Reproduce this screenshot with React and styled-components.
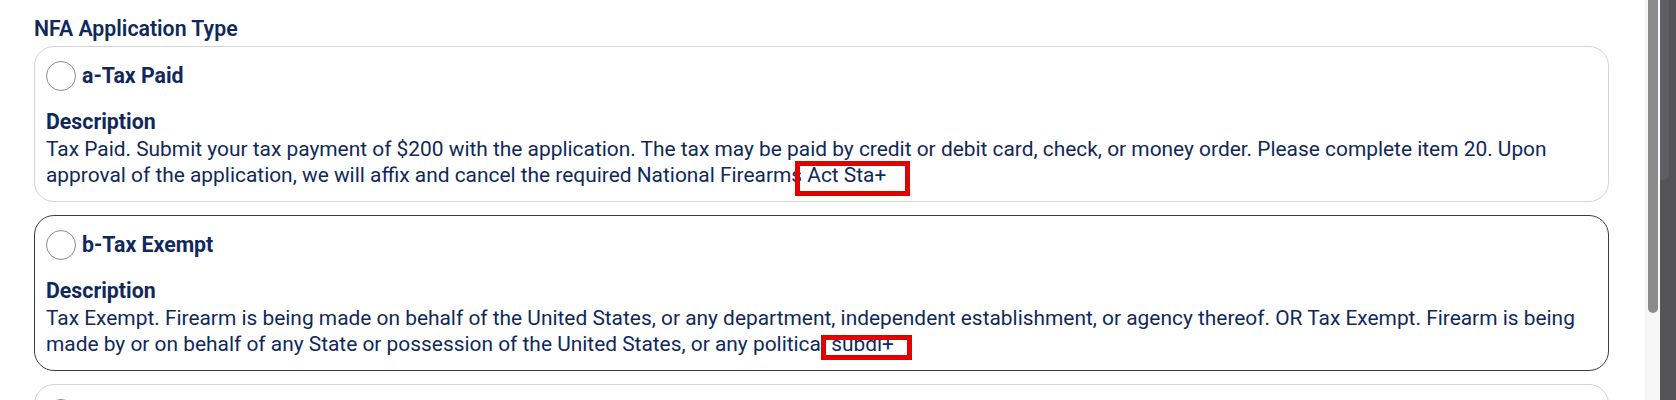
import React from "react";
import styled, { createGlobalStyle } from "styled-components";

const GlobalStyle = createGlobalStyle`
  html, body {
    margin: 0;
    padding: 0;
    background: #ffffff;
    font-family: Roboto, "Noto Sans", Arial, sans-serif;
  }
`;

const Shell = styled.div`
  display: flex;
  height: 400px;
  overflow: hidden;
  background: #ffffff;
`;

const Main = styled.main`
  flex: 1;
  min-width: 0;
  padding: 17px 36px 0 34px;
`;

const Title = styled.h2`
  margin: 0 0 5px;
  font-size: 21.3px;
  line-height: 24px;
  font-weight: 600;
  color: #10295a;
`;

const List = styled.div`
  display: flex;
  flex-direction: column;
  gap: 13px;
`;

const Card = styled.label`
  position: relative;
  display: block;
  box-sizing: border-box;
  height: 156px;
  padding: 14px 6px 13px 11px;
  border: 1px solid ${(p) => (p.$active ? "#3c3c3c" : "#d3d3d3")};
  border-radius: 20px;
  background: #ffffff;
  color: #10295a;
`;

const Header = styled.div`
  display: flex;
  align-items: center;
  gap: 6px;
  height: 30px;
  margin-bottom: 17px;
`;

const Radio = styled.span`
  box-sizing: border-box;
  width: 30px;
  height: 30px;
  border-radius: 50%;
  border: 1px solid #8a8a8a;
  background: #ffffff;
  flex: none;
`;

const OptionName = styled.span`
  font-size: 21.3px;
  font-weight: 700;
  line-height: 30px;
  color: #10295a;
`;

const DescTitle = styled.div`
  font-size: 21.3px;
  font-weight: 700;
  line-height: 28px;
`;

const DescText = styled.p`
  margin: 0;
  font-size: 20.9px;
  line-height: 26px;
  font-weight: 400;
`;

const Highlight = styled.span`
  position: absolute;
  box-sizing: border-box;
  border: 5px solid #e30000;
  pointer-events: none;
`;

const Track = styled.div`
  width: 15px;
  flex: none;
  background: #f7f7f7;
  display: flex;
  justify-content: center;
`;

const Thumb = styled.div`
  width: 10px;
  height: 313px;
  background: #8b8b8b;
  border-radius: 0 0 5px 5px;
`;

const SidePanel = styled.div`
  width: 16px;
  flex: none;
  background: #545457;
`;

const SideTab = styled.div`
  width: 9px;
  height: 180px;
  background: #5f5f63;
  border-radius: 0 0 6px 0;
`;

const options = [
  {
    name: "a-Tax Paid",
    text:
      "Tax Paid. Submit your tax payment of $200 with the application. The tax may be paid by credit or debit card, check, or money order. Please complete item 20. Upon approval of the application, we will affix and cancel the required National Firearms Act Sta+",
    box: { left: 760, top: 114, width: 115, height: 35 },
  },
  {
    name: "b-Tax Exempt",
    active: true,
    text:
      "Tax Exempt. Firearm is being made on behalf of the United States, or any department, independent establishment, or agency thereof. OR Tax Exempt. Firearm is being made by or on behalf of any State or possession of the United States, or any political subdi+",
    box: { left: 786, top: 119, width: 91, height: 25 },
  },
];

export default function App() {
  return (
    <>
      <GlobalStyle />
      <Shell>
        <Main>
          <Title>NFA Application Type</Title>
          <List>
            {options.map((o) => (
              <Card key={o.name} $active={o.active}>
                <Header>
                  <Radio />
                  <OptionName>{o.name}</OptionName>
                </Header>
                <DescTitle>Description</DescTitle>
                <DescText>{o.text}</DescText>
                <Highlight style={o.box} />
              </Card>
            ))}
            <Card>
              <Header>
                <Radio />
              </Header>
            </Card>
          </List>
        </Main>
        <Track>
          <Thumb />
        </Track>
        <SidePanel>
          <SideTab />
        </SidePanel>
      </Shell>
    </>
  );
}
